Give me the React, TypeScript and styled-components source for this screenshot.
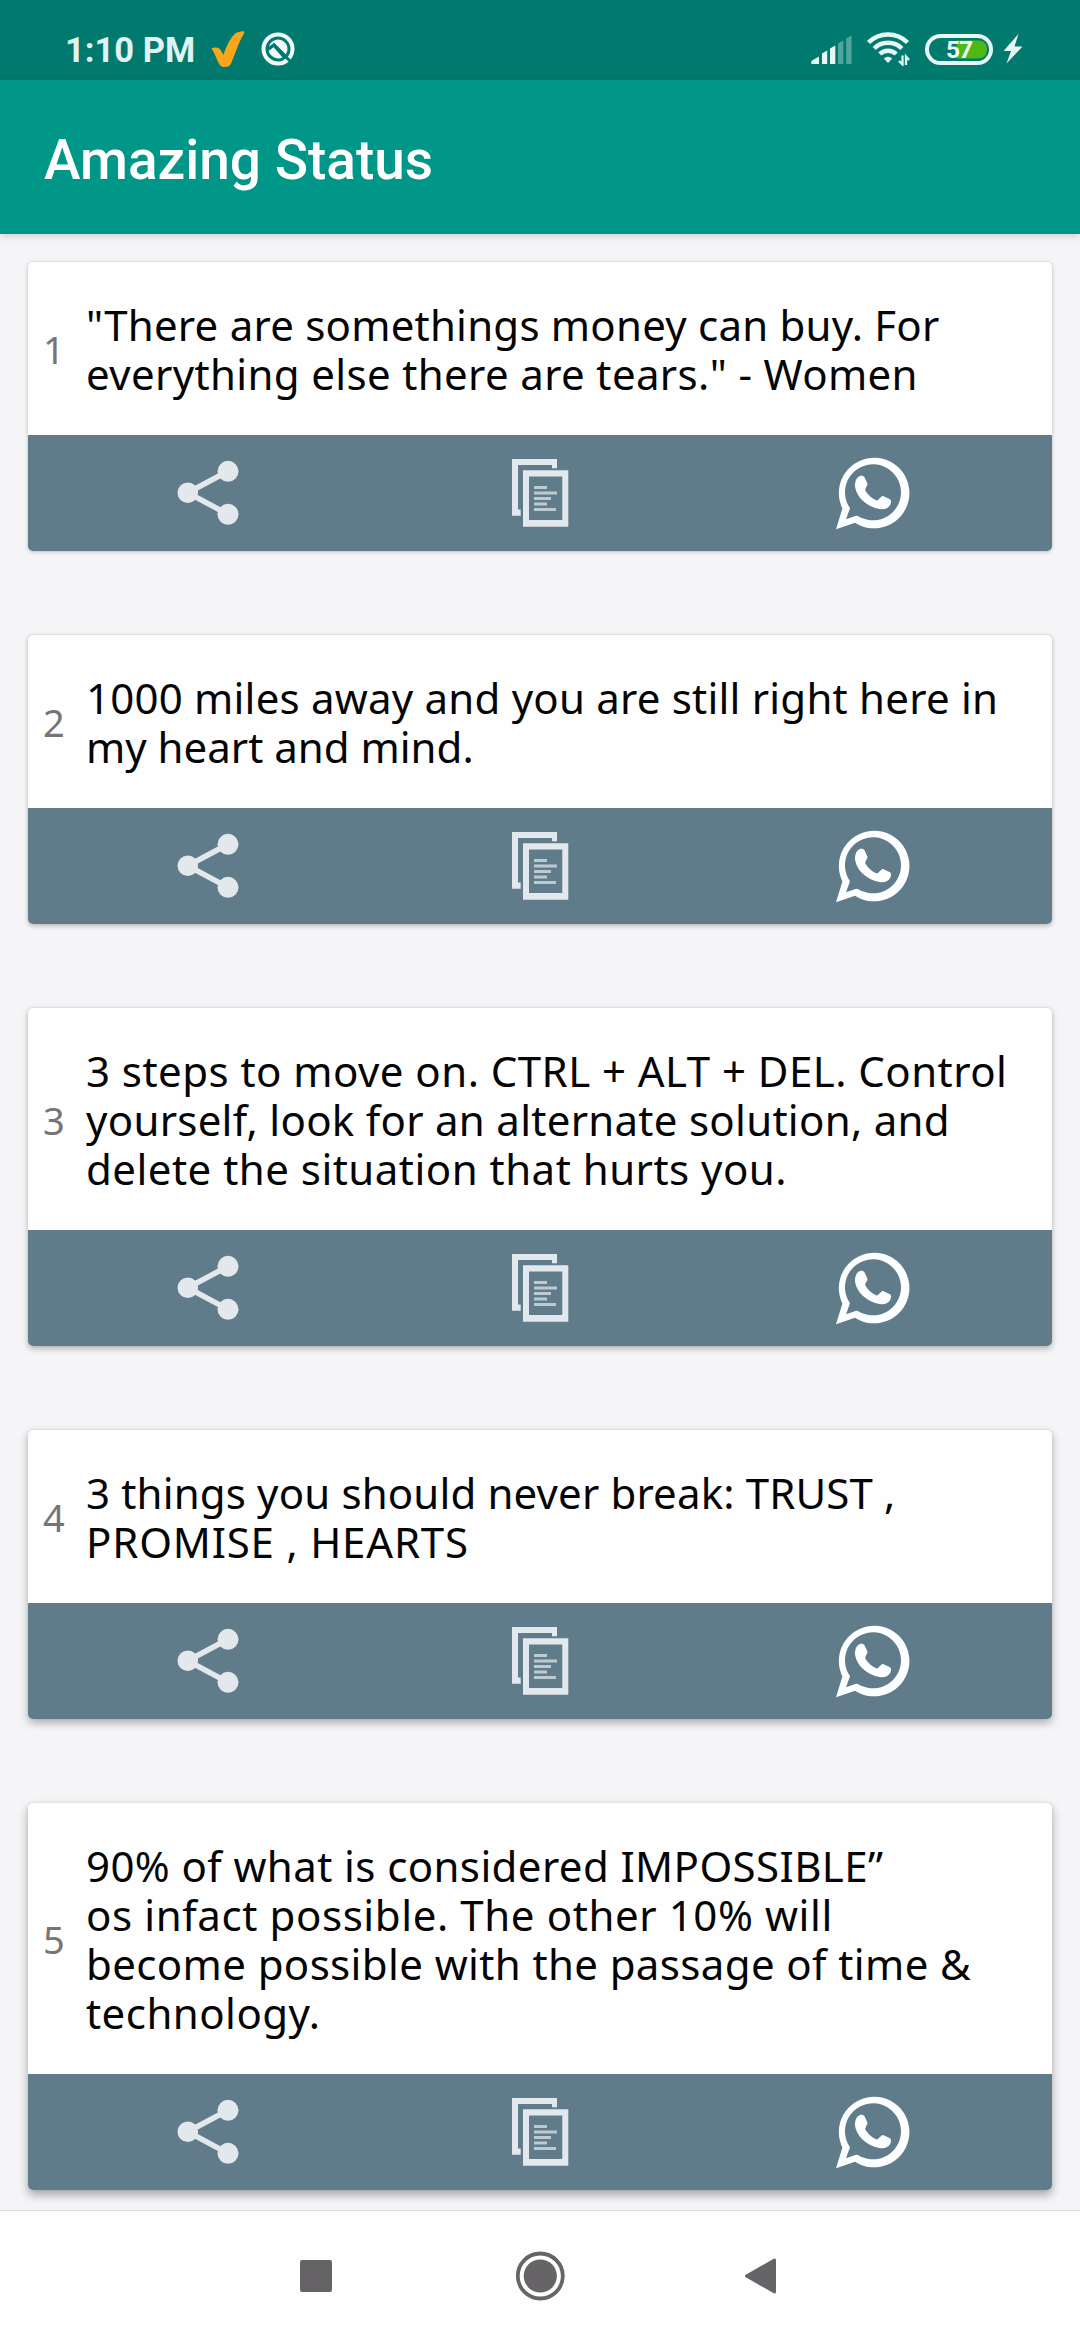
import React from 'react';
import styled, { createGlobalStyle } from 'styled-components';

const GlobalStyle = createGlobalStyle`
  html, body { margin: 0; padding: 0; }
  body { background: #f5f4f6; font-family: Roboto, "Noto Sans", sans-serif; }
  * { box-sizing: border-box; }
  svg { display: block; flex: none; }
`;

const Screen = styled.div`
  display: flex;
  flex-direction: column;
  width: 1080px;
  height: 2340px;
  overflow: hidden;
  background: #f5f4f6;
`;

const StatusBar = styled.header`
  display: flex;
  align-items: center;
  justify-content: space-between;
  flex: none;
  height: 80px;
  padding: 18px 57px 0 65px;
  background: #007a6e;
`;

const StatusGroup = styled.div<{ $gap: number }>`
  display: flex;
  align-items: center;
  gap: ${(p) => p.$gap}px;
`;

const Clock = styled.span`
  width: 130px;
  padding-top: 1px;
  font: 700 34.5px/40px Roboto, sans-serif;
  white-space: nowrap;
  color: #e0f2f1;
`;

const AppBar = styled.div`
  display: flex;
  align-items: center;
  flex: none;
  height: 154px;
  padding: 6px 44px 0;
  background: #009688;
  box-shadow: 0 2px 8px rgba(0, 0, 0, 0.16);
`;

const Title = styled.h1`
  margin: 0;
  font: 500 55px/64px Roboto, sans-serif;
  color: #fff;
`;

const List = styled.main`
  display: flex;
  flex-direction: column;
  flex: 1;
  gap: 84px;
  min-height: 0;
  padding: 28px 28px 0;
  overflow: hidden;
`;

const Card = styled.article<{ $depth: number }>`
  flex: none;
  border-radius: 5px;
  background: #fefefe;
  box-shadow: 0 ${(p) => 1 + p.$depth * 0.8}px ${(p) => 4 + p.$depth * 1.4}px
      rgba(0, 0, 0, ${(p) => 0.2 + p.$depth * 0.03}),
    0 0 2px rgba(0, 0, 0, 0.1);
`;

const CardBody = styled.div`
  display: flex;
  align-items: center;
  padding: 38px 0 37px 15px;
`;

const Index = styled.span`
  width: 43px;
  font: 400 38px/50px "Noto Sans", sans-serif;
  color: #767477;
`;

const Quote = styled.p`
  margin: 0;
  font: 400 42px/49px "Noto Sans", sans-serif;
  color: #050505;
`;

const Line = styled.span<{ $tracking: number }>`
  display: block;
  white-space: pre;
  letter-spacing: ${(p) => p.$tracking}px;
`;

const Actions = styled.div`
  display: grid;
  grid-template-columns: repeat(3, 1fr);
  height: 116px;
  padding: 0 14px;
  border-radius: 0 0 5px 5px;
  background: #607c8b;
`;

const Action = styled.button`
  display: flex;
  align-items: center;
  justify-content: center;
  padding: 0;
  border: 0;
  background: none;
`;

const NavBar = styled.nav`
  display: flex;
  align-items: center;
  justify-content: center;
  gap: 160px;
  flex: none;
  position: relative;
  height: 130px;
  border-top: 1px solid #dcdadd;
  background: #fefefe;
`;

const CheckMark = () => (
  <svg width="34" height="37" viewBox="0 0 34 37">
    <path
      d="M0.500 17.500C2 16.800 3 16.700 4.500 16.600C7.500 16.500 9 17.800 10.200 20L12.500 24C15 16 19 7.500 23.500 3.300C26 1 29 0.300 32.500 0.300C33.800 0.400 33.400 2 32.700 3.200C28 10.500 24.500 21.500 20.500 31.500C19 35.500 16 36.500 12.500 36C9.500 35.600 8.500 34 7.500 31.800C5.500 27.500 3.500 22 0.500 17.500Z"
      fill="#faa61a"
    />
  </svg>
);

const AndroidTen = () => (
  <svg width="34" height="34" viewBox="0 0 34 34">
    <circle cx="17" cy="17" r="14.500" fill="none" stroke="#f2fbfa" strokeWidth="4" />
    <path d="M9.300 11.500A9.500 9.500 0 1 1 24.800 22.500L13.500 11.500L8 15A9.500 9.500 0 0 1 9.300 11.500Z" fill="#f2fbfa" />
    <path d="M7.600 18.500L12.500 15L21.500 25.500A10 10 0 0 1 7.600 18.500Z" fill="#f2fbfa" />
    <path d="M6.500 17.800L13 12.800L29 29" fill="none" stroke="#007a6e" strokeWidth="3" />
  </svg>
);

const Signal = () => (
  <svg width="41" height="29" viewBox="0 0 41 29" fill="#e8f6f5">
    <path d="M1 25.500L8 21.500V29H1.500Q0 29 0 27.500Z" />
    <path d="M11 18.500L16.200 15.500V29H11Z" />
    <path d="M19 13.500L24.300 10.500V29H19Z" />
    <path d="M27 8.500L32.300 5.500V29H27Z" opacity="0.350" />
    <path d="M35.200 3.500L40.500 0.500V29H35.200Z" opacity="0.350" />
  </svg>
);

const Wifi = () => (
  <svg width="43" height="34" viewBox="0 0 43 34" fill="none" stroke="#e8f6f5">
    <path d="M1.500 10.500A27.500 27.500 0 0 1 40.500 10.500" strokeWidth="4.500" />
    <path d="M7.200 16.500A19.500 19.500 0 0 1 34.800 16.500" strokeWidth="4.500" />
    <path d="M12.800 22A11.800 11.800 0 0 1 29.200 22" strokeWidth="4.500" />
    <path d="M16.800 26.500Q21 23 25.200 26.500L22 30Q21 31 20 30Z" fill="#e8f6f5" stroke="none" />
    <path d="M35.500 23.500V32.500L32 29M39 33V24.500L42 28" strokeWidth="2.300" />
  </svg>
);

const BatteryGroup = styled.div`
  display: flex;
  align-items: center;
  gap: 10px;
`;

const Battery = () => (
  <svg width="68" height="31" viewBox="0 0 68 31">
    <rect x="2" y="2" width="64" height="27" rx="13.500" fill="none" stroke="#e8f6f5" strokeWidth="4" />
    <path d="M31.700 6.500H53Q62 6.500 62 15.500T53 24.500H31.700Z" fill="#4cb915" />
    <text
      x="34"
      y="24.300"
      textAnchor="middle"
      fontFamily="Roboto, sans-serif"
      fontWeight="700"
      fontSize="24.500"
      letterSpacing="-1"
      fill="#f1faf5"
    >
      57
    </text>
  </svg>
);

const Bolt = () => (
  <svg width="20" height="30" viewBox="0 0 20 30">
    <path d="M15.500 0L0.500 17H8L3.500 29.500L19.500 12.500H11.500Z" fill="#e8f6f5" />
  </svg>
);

const ShareIcon = () => (
  <svg width="84" height="84" viewBox="0 0 84 84" fill="#e2e8eb">
    <path d="M62 20.300L21.700 41.700L62 63.300" fill="none" stroke="#e2e8eb" strokeWidth="5.500" />
    <circle cx="21.800" cy="41.800" r="10.300" />
    <circle cx="62" cy="20.300" r="10.500" />
    <circle cx="62" cy="63.300" r="10.500" />
  </svg>
);

const CopyIcon = () => (
  <svg width="84" height="84" viewBox="0 0 84 84">
    <path d="M14 8H59V17.300H54V14H20V58.500H22.700V64.700H14Z" fill="#e2e8eb" />
    <path fillRule="evenodd" d="M25 19.300H70.300V75.700H25ZM31 25.500V69H64.300V25.500Z" fill="#e2e8eb" />
    <path d="M36 36.500H49M36 42H59M36 47.500H53M36 53H49M36 58.500H58" stroke="#bccad1" strokeWidth="2.800" />
  </svg>
);

const WhatsAppIcon = () => (
  <svg width="84" height="84" viewBox="0 0 84 84" fill="#fdfeff">
    <path
      fillRule="evenodd"
      d="M12.400 57.500A35.300 35.300 0 1 1 25 71.700L6 78.300ZM20 57.300L16 68.300L24 65.500Q26 64.500 27.900 64.900A28 28 0 1 0 20 57.300Z"
    />
    <path d="M25 34.500C25 30 26.700 26.500 29.500 25.200C31.500 24.300 33.700 24.600 34.600 26.500L37.300 32.200C38.300 34.800 34.600 36.800 35.300 39.500C38 44 42 47.600 46.500 49.500C48.800 49.800 50.500 45 53 45L60 48.200C61.500 49 61.200 51.500 60.300 53.700C58.700 56.800 55 58.300 51.700 58.200C46 58 38 54.700 32.500 49.500C28 45 25.200 39.500 25 34.500Z" />
  </svg>
);

type QuoteLine = [text: string, tracking: number];

const quotes: QuoteLine[][] = [
  [
    ['"There are somethings money can buy. For', 0.22],
    ['everything else there are tears." - Women', 0.355],
  ],
  [
    ['1000 miles away and you are still right here in', 0.213],
    ['my heart and mind.', 0],
  ],
  [
    ['3 steps to move on. CTRL + ALT + DEL. Control', 0.457],
    ['yourself, look for an alternate solution, and', 0.28],
    ['delete the situation that hurts you.', 0.48],
  ],
  [
    ['3 things you should never break: TRUST ,', 0.15],
    ['PROMISE , HEARTS', 0.8],
  ],
  [
    ['90% of what is considered IMPOSSIBLE”', 0.4],
    ['os infact possible. The other 10% will', 0.6],
    ['become possible with the passage of time &', 0.38],
    ['technology.', 0.46],
  ],
];

export default function App() {
  return (
    <>
      <GlobalStyle />
      <Screen>
        <StatusBar>
          <StatusGroup $gap={16}>
            <Clock>1:10 PM</Clock>
            <CheckMark />
            <AndroidTen />
          </StatusGroup>
          <StatusGroup $gap={15}>
            <Signal />
            <Wifi />
            <BatteryGroup>
              <Battery />
              <Bolt />
            </BatteryGroup>
          </StatusGroup>
        </StatusBar>
        <AppBar>
          <Title>Amazing Status</Title>
        </AppBar>
        <List>
          {quotes.map((lines, i) => (
            <Card key={i} $depth={i}>
              <CardBody>
                <Index>{i + 1}</Index>
                <Quote>
                  {lines.map(([text, tracking]) => (
                    <Line key={text} $tracking={tracking}>
                      {text}
                    </Line>
                  ))}
                </Quote>
              </CardBody>
              <Actions>
                <Action aria-label="Share">
                  <ShareIcon />
                </Action>
                <Action aria-label="Copy">
                  <CopyIcon />
                </Action>
                <Action aria-label="WhatsApp">
                  <WhatsAppIcon />
                </Action>
              </Actions>
            </Card>
          ))}
        </List>
        <NavBar>
          <svg width="64" height="64" viewBox="0 0 64 64">
            <rect x="16" y="16" width="32" height="32" rx="2" fill="#666467" />
          </svg>
          <svg width="64" height="64" viewBox="0 0 64 64">
            <circle cx="32.300" cy="32" r="22.500" fill="none" stroke="#666467" strokeWidth="3.800" />
            <circle cx="32.300" cy="32" r="16.600" fill="#666467" />
          </svg>
          <svg width="64" height="64" viewBox="0 0 64 64">
            <path d="M42.500 16V48L14.500 32Z" fill="#666467" stroke="#666467" strokeWidth="3" strokeLinejoin="round" />
          </svg>
        </NavBar>
      </Screen>
    </>
  );
}
